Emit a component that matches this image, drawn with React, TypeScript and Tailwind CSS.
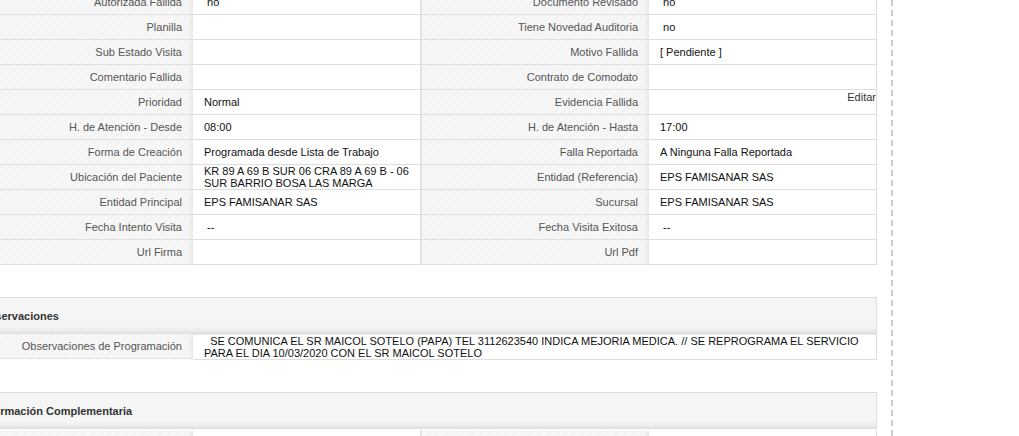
import React from 'react';

type Pair = [string, string];

const leftRows: Pair[] = [
  ['Autorizada Fallida', '\u00a0no'],
  ['Planilla', ''],
  ['Sub Estado Visita', ''],
  ['Comentario Fallida', ''],
  ['Prioridad', 'Normal'],
  ['H. de Atención - Desde', '08:00'],
  ['Forma de Creación', 'Programada desde Lista de Trabajo'],
  ['Ubicación del Paciente', 'KR 89 A 69 B SUR 06 CRA 89 A 69 B - 06 SUR BARRIO BOSA LAS MARGA'],
  ['Entidad Principal', 'EPS FAMISANAR SAS'],
  ['Fecha Intento Visita', '\u00a0--'],
  ['Url Firma', ''],
];

const rightRows: Pair[] = [
  ['Documento Revisado', '\u00a0no'],
  ['Tiene Novedad Auditoria', '\u00a0no'],
  ['Motivo Fallida', '[ Pendiente ]'],
  ['Contrato de Comodato', ''],
  ['Evidencia Fallida', ''],
  ['H. de Atención - Hasta', '17:00'],
  ['Falla Reportada', 'A Ninguna Falla Reportada'],
  ['Entidad (Referencia)', 'EPS FAMISANAR SAS'],
  ['Sucursal', 'EPS FAMISANAR SAS'],
  ['Fecha Visita Exitosa', '\u00a0--'],
  ['Url Pdf', ''],
];

const labelCls =
  'flex items-center justify-end pr-[11px] text-right text-[#555] border-b border-[#e1e1e1] bg-[repeating-linear-gradient(135deg,#f4f4f4_0px,#f4f4f4_3px,#f7f7f7_3px,#f7f7f7_6px)] shadow-[inset_-5px_0_4px_-3px_rgba(0,0,0,0.07)]';
const valueCls =
  'relative flex items-center pl-[11px] pr-[8px] leading-[12px] text-[#111] bg-white border-b border-r border-[#dedede]';

const Label = ({ children }: { children: React.ReactNode }) => (
  <div className={`${labelCls} h-[25px] border-l border-l-[#e6e6e6]`}>{children}</div>
);

const SectionHeader = ({ title }: { title: string }) => (
  <div className="h-[37px] pl-[14px] flex items-center font-bold text-[#333] border-t border-x border-[#dddddd] bg-[linear-gradient(to_bottom,#f5f5f5_0%,#f5f5f5_80%,#ececec_90%,#dedede_100%)]">
    {title}
  </div>
);

export default function App() {
  return (
    <div className="w-[1019px] h-[436px] overflow-hidden bg-white font-['Liberation_Sans',Arial,sans-serif] text-[11px]">
      <div className="flex">
        <div className="w-[912px] shrink-0 -ml-[35px] -mt-[10px]">
          <div className="grid grid-cols-[228px_228px_228px_228px]">
            {leftRows.map((l, i) => {
              const r = rightRows[i];
              return (
                <React.Fragment key={i}>
                  <Label>{l[0]}</Label>
                  <div className={`${valueCls} h-[25px]`}>{l[1]}</div>
                  <Label>{r[0]}</Label>
                  <div className={`${valueCls} h-[25px]`}>
                    {r[1]}
                    {r[0] === 'Evidencia Fallida' && (
                      <span className="absolute right-0 top-[1px] text-[#333]">Editar</span>
                    )}
                  </div>
                </React.Fragment>
              );
            })}
          </div>

          <div className="mt-[32px]">
            <SectionHeader title="Observaciones" />
            <div className="grid grid-cols-[228px_684px]">
              <Label>
                <span className="pt-[1px]">Observaciones de Programación</span>
              </Label>
              <div className={`${valueCls} h-[26px] border-t border-t-[#e6e6e6]`}>
                {'\u00a0\u00a0'}SE COMUNICA EL SR MAICOL SOTELO (PAPA) TEL 3112623540 INDICA MEJORIA MEDICA. // SE REPROGRAMA EL SERVICIO PARA EL DIA 10/03/2020 CON EL SR MAICOL SOTELO
              </div>
            </div>
          </div>

          <div className="mt-[32px]">
            <SectionHeader title="Información Complementaria" />
            <div className="grid grid-cols-[228px_228px_228px_228px] mt-[1px]">
              <Label>{''}</Label>
              <div className={`${valueCls} h-[25px]`} />
              <Label>{''}</Label>
              <div className={`${valueCls} h-[25px]`} />
            </div>
          </div>
        </div>
        <div className="ml-[14px] h-[436px] border-l-2 border-dashed border-[#cccccc]" />
      </div>
    </div>
  );
}
